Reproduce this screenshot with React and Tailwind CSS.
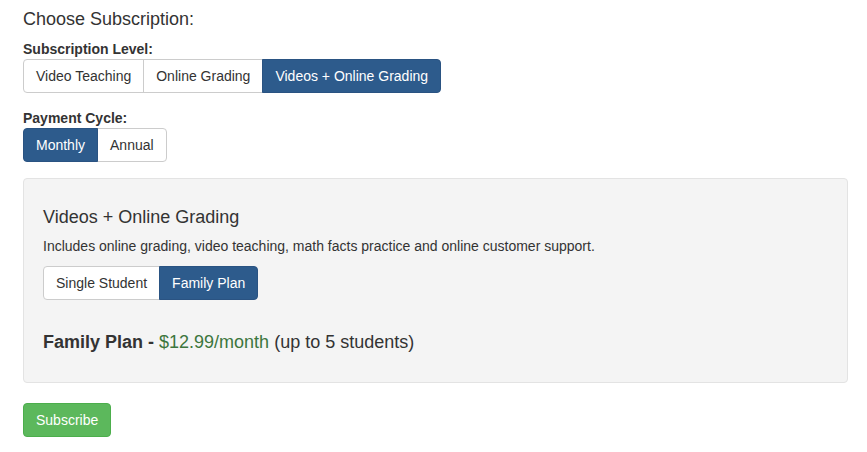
import React, { useState } from 'react'

const LEVELS = ['Video Teaching', 'Online Grading', 'Videos + Online Grading']
const CYCLES = ['Monthly', 'Annual']
const PLANS = ['Single Student', 'Family Plan']

function BtnGroup({ items, value, onChange }) {
  return (
    <div className="flex">
      {items.map((it, i) => {
        const active = it === value
        return (
          <button
            key={it}
            type="button"
            onClick={() => onChange(it)}
            className={`h-[34px] px-[12px] text-[14px] leading-[20px] border -ml-px first:ml-0 first:rounded-l-[4px] last:rounded-r-[4px] ${
              active ? 'bg-[#2d5b8c] border-[#2a5382] text-white relative z-10' : 'bg-white border-[#ccc] text-[#333]'
            }`}
          >
            {it}
          </button>
        )
      })}
    </div>
  )
}

export default function App() {
  const [level, setLevel] = useState('Videos + Online Grading')
  const [cycle, setCycle] = useState('Monthly')
  const [plan, setPlan] = useState('Family Plan')

  return (
    <div className="bg-white min-h-[452px] px-[23px] pt-[8px] text-[#333]" style={{ fontFamily: '"Liberation Sans", Arial, sans-serif' }}>
      <h3 className="text-[18px] leading-[22px] mb-[9px]">Choose Subscription:</h3>

      <div className="text-[14px] font-bold leading-[20px]">Subscription Level:</div>
      <BtnGroup items={LEVELS} value={level} onChange={setLevel} />

      <div className="text-[14px] font-bold leading-[20px] mt-[15px]">Payment Cycle:</div>
      <BtnGroup items={CYCLES} value={cycle} onChange={setCycle} />

      {/* plan details */}
      <div className="mt-[16px] w-[825px] h-[205px] bg-[#f4f4f4] border border-[#e3e3e3] rounded-[4px] px-[19px] pt-[27px]">
        <div className="text-[18px] leading-[22px]">Videos + Online Grading</div>
        <p className="text-[14px] leading-[20px] mt-[8px]">
          Includes online grading, video teaching, math facts practice and online customer support.
        </p>
        <div className="mt-[10px]">
          <BtnGroup items={PLANS} value={plan} onChange={setPlan} />
        </div>
        <div className="text-[18px] leading-[22px] mt-[31px]">
          <span className="font-bold">Family Plan - </span>
          <span className="text-[#3c763d]">$12.99/month</span> (up to 5 students)
        </div>
      </div>

      <button
        type="button"
        className="mt-[20px] h-[34px] px-[12px] text-[14px] text-white bg-[#5cb85c] border border-[#4cae4c] rounded-[4px]"
      >
        Subscribe
      </button>
    </div>
  )
}
